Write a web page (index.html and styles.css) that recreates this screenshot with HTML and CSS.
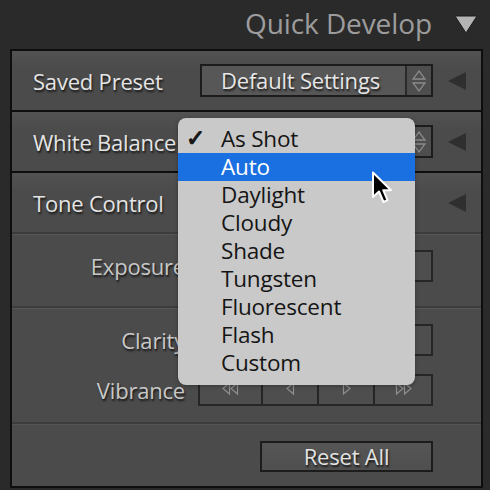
FILE: index.html
```html
<!DOCTYPE html>
<html>
<head>
<meta charset="utf-8">
<link rel="stylesheet" href="styles.css">
</head>
<body>
<div class="screen">
  <header class="title">
    <span class="title-text">Quick Develop</span>
    <svg class="disclosure" width="24" height="19" viewBox="0 0 24 19"><polygon points="1,1 23,1 12,18" fill="#b4b4b4" stroke="#1a1a1a" stroke-width="1"/></svg>
  </header>
  <div class="panel">
    <section class="row">
      <div class="label">Saved Preset</div>
      <div class="select">
        <span class="select-value">Default Settings</span>
        <span class="stepper"><svg width="16" height="26" viewBox="0 0 16 26"><polygon points="8,3 14,11 2,11" fill="none" stroke="#8a8a8a" stroke-width="1.3"/><polygon points="2,15 14,15 8,23" fill="none" stroke="#8a8a8a" stroke-width="1.3"/></svg></span>
      </div>
      <svg class="collapse" width="18" height="18" viewBox="0 0 18 18"><polygon points="18,0 18,18 0,9" fill="#2f2f2f"/></svg>
    </section>
    <section class="row">
      <div class="label">White Balance</div>
      <div class="select">
        <span class="select-value">As Shot</span>
        <span class="stepper"><svg width="16" height="26" viewBox="0 0 16 26"><polygon points="8,3 14,11 2,11" fill="none" stroke="#8a8a8a" stroke-width="1.3"/><polygon points="2,15 14,15 8,23" fill="none" stroke="#8a8a8a" stroke-width="1.3"/></svg></span>
      </div>
      <svg class="collapse" width="18" height="18" viewBox="0 0 18 18"><polygon points="18,0 18,18 0,9" fill="#2f2f2f"/></svg>
    </section>
    <section class="row row-tone">
      <div class="label">Tone Control</div>
      <div></div>
      <svg class="collapse" width="18" height="18" viewBox="0 0 18 18"><polygon points="18,0 18,18 0,9" fill="#2f2f2f"/></svg>
    </section>
    <section class="sub sub-single">
      <div class="sub-line">
        <div class="sub-label">Exposure</div>
        <div class="seg">
          <span class="seg-btn"><svg width="17" height="13" viewBox="0 0 17 13"><polygon points="7.5,1 7.5,12 1,6.5" fill="none" stroke="#8e8e8e" stroke-width="1.2"/><polygon points="15.5,1 15.5,12 9,6.5" fill="none" stroke="#8e8e8e" stroke-width="1.2"/></svg></span>
          <span class="seg-btn"><svg width="9" height="13" viewBox="0 0 9 13"><polygon points="7.5,1 7.5,12 1,6.5" fill="none" stroke="#8e8e8e" stroke-width="1.2"/></svg></span>
          <span class="seg-btn"><svg width="9" height="13" viewBox="0 0 9 13"><polygon points="1.5,1 1.5,12 8,6.5" fill="none" stroke="#8e8e8e" stroke-width="1.2"/></svg></span>
          <span class="seg-btn"><svg width="17" height="13" viewBox="0 0 17 13"><polygon points="1.5,1 1.5,12 8,6.5" fill="none" stroke="#8e8e8e" stroke-width="1.2"/><polygon points="9.5,1 9.5,12 16,6.5" fill="none" stroke="#8e8e8e" stroke-width="1.2"/></svg></span>
        </div>
      </div>
    </section>
    <section class="sub sub-double">
      <div class="sub-line">
        <div class="sub-label">Clarity</div>
        <div class="seg">
          <span class="seg-btn"><svg width="17" height="13" viewBox="0 0 17 13"><polygon points="7.5,1 7.5,12 1,6.5" fill="none" stroke="#8e8e8e" stroke-width="1.2"/><polygon points="15.5,1 15.5,12 9,6.5" fill="none" stroke="#8e8e8e" stroke-width="1.2"/></svg></span>
          <span class="seg-btn"><svg width="9" height="13" viewBox="0 0 9 13"><polygon points="7.5,1 7.5,12 1,6.5" fill="none" stroke="#8e8e8e" stroke-width="1.2"/></svg></span>
          <span class="seg-btn"><svg width="9" height="13" viewBox="0 0 9 13"><polygon points="1.5,1 1.5,12 8,6.5" fill="none" stroke="#8e8e8e" stroke-width="1.2"/></svg></span>
          <span class="seg-btn"><svg width="17" height="13" viewBox="0 0 17 13"><polygon points="1.5,1 1.5,12 8,6.5" fill="none" stroke="#8e8e8e" stroke-width="1.2"/><polygon points="9.5,1 9.5,12 16,6.5" fill="none" stroke="#8e8e8e" stroke-width="1.2"/></svg></span>
        </div>
      </div>
      <div class="sub-line">
        <div class="sub-label">Vibrance</div>
        <div class="seg">
          <span class="seg-btn"><svg width="17" height="13" viewBox="0 0 17 13"><polygon points="7.5,1 7.5,12 1,6.5" fill="none" stroke="#8e8e8e" stroke-width="1.2"/><polygon points="15.5,1 15.5,12 9,6.5" fill="none" stroke="#8e8e8e" stroke-width="1.2"/></svg></span>
          <span class="seg-btn"><svg width="9" height="13" viewBox="0 0 9 13"><polygon points="7.5,1 7.5,12 1,6.5" fill="none" stroke="#8e8e8e" stroke-width="1.2"/></svg></span>
          <span class="seg-btn"><svg width="9" height="13" viewBox="0 0 9 13"><polygon points="1.5,1 1.5,12 8,6.5" fill="none" stroke="#8e8e8e" stroke-width="1.2"/></svg></span>
          <span class="seg-btn"><svg width="17" height="13" viewBox="0 0 17 13"><polygon points="1.5,1 1.5,12 8,6.5" fill="none" stroke="#8e8e8e" stroke-width="1.2"/><polygon points="9.5,1 9.5,12 16,6.5" fill="none" stroke="#8e8e8e" stroke-width="1.2"/></svg></span>
        </div>
      </div>
    </section>
    <section class="footer">
      <div class="reset">Reset All</div>
    </section>
  </div>

  <ul class="menu">
    <li class="menu-item checked"><span class="check">✓</span>As Shot</li>
    <li class="menu-item active">Auto</li>
    <li class="menu-item">Daylight</li>
    <li class="menu-item">Cloudy</li>
    <li class="menu-item">Shade</li>
    <li class="menu-item">Tungsten</li>
    <li class="menu-item">Fluorescent</li>
    <li class="menu-item">Flash</li>
    <li class="menu-item">Custom</li>
  </ul>

  <svg class="cursor" width="24" height="36" viewBox="0 0 24 36">
    <polygon points="2,1.5 2,26 8,20.5 12.5,31 16.5,29.2 12.2,19.2 20,19.2" fill="#000" stroke="#fff" stroke-width="2" stroke-linejoin="round"/>
  </svg>
</div>
</body>
</html>
```

FILE: styles.css
```css
* { box-sizing: border-box; }
html, body {
  margin: 0;
  padding: 0;
  background: #2a2a2a;
}
.screen {
  position: relative;
  width: 490px;
  height: 490px;
  overflow: hidden;
  background: #2a2a2a;
  font-family: "Open Sans", "DejaVu Sans", sans-serif;
}
.title {
  height: 49px;
  display: flex;
  align-items: center;
  justify-content: flex-end;
  padding-right: 12px;
  gap: 22px;
}
.title-text {
  font-size: 28px;
  color: #9c9c9c;
  letter-spacing: -0.1px;
  margin-top: -3px;
}
.disclosure { display: block; margin-top: -1px; }

.panel {
  margin-left: 10px;
  width: 473px;
  border: 2px solid #0e0e0e;
  background: #4b4b4b;
}
.row {
  display: grid;
  grid-template-columns: 188px 233px 1fr;
  align-items: center;
  height: 61px;
  border-bottom: 2px solid #0e0e0e;
  background: linear-gradient(#525252, #4b4b4b 30%);
}
.row-tone {
  border-bottom: 2px solid #3c3c3c;
  height: 61px;
}
.label {
  padding-left: 21px;
  font-size: 22px;
  color: #e4e4e4;
  text-shadow: 1px 2px 2px #161616;
  white-space: nowrap;
  letter-spacing: -0.2px;
}
.select {
  height: 33px;
  display: flex;
  border: 2px solid #1c1c1c;
  background: #575757;
}
.select-value {
  flex: 1;
  font-size: 22px;
  color: #e6e6e6;
  text-shadow: 1px 2px 2px #1a1a1a;
  padding-left: 19px;
  line-height: 29px;
  letter-spacing: -0.2px;
  white-space: nowrap;
}
.stepper {
  width: 26px;
  border-left: 2px solid #2a2a2a;
  background: #4e4e4e;
  display: flex;
  align-items: center;
  justify-content: center;
}
.stepper svg { display: block; }
.collapse { justify-self: center; display: block; margin-left: -1px; }

.sub {
  border-top: 1px solid #555;
  border-bottom: 2px solid #3c3c3c;
}
.sub-single { height: 74px; padding-top: 15px; }
.sub-double {
  height: 116px;
  padding-top: 15px;
  display: flex;
  flex-direction: column;
  gap: 18px;
}
.sub-line {
  display: grid;
  grid-template-columns: 186px 235px;
  align-items: center;
  height: 32px;
}
.sub-label {
  text-align: right;
  padding-right: 13px;
  font-size: 22px;
  color: #c8c8c8;
  text-shadow: 1px 2px 2px #161616;
  letter-spacing: -0.2px;
}
.seg {
  height: 32px;
  display: grid;
  grid-template-columns: 61px 56px 56px 1fr;
  border: 2px solid #262626;
  background: #4e4e4e;
}
.seg-btn {
  display: flex;
  align-items: center;
  justify-content: center;
  border-left: 2px solid #262626;
}
.seg-btn:first-child { border-left: none; }
.seg-btn svg { display: block; margin-top: -3px; }

.footer {
  height: 62px;
  border-top: 1px solid #555;
  display: flex;
  align-items: center;
  padding-left: 248px;
  padding-top: 2px;
}
.reset {
  width: 173px;
  height: 31px;
  border: 2px solid #1c1c1c;
  background: linear-gradient(#555, #4f4f4f);
  font-size: 22px;
  color: #e2e2e2;
  text-shadow: 1px 2px 2px #161616;
  text-align: center;
  line-height: 26px;
  letter-spacing: -0.2px;
}

.menu {
  position: absolute;
  left: 178px;
  top: 118px;
  width: 237px;
  height: 267px;
  margin: 0;
  padding: 7px 0 0;
  list-style: none;
  background: #c9c9c9;
  border-radius: 8px;
  box-shadow: 0 1px 4px rgba(0,0,0,0.3);
}
.menu-item {
  position: relative;
  height: 28px;
  line-height: 28px;
  padding-left: 43px;
  font-size: 22.5px;
  color: #151515;
  letter-spacing: -0.2px;
}
.menu-item.active {
  background: #1a6fe1;
  color: #fff;
}
.check {
  position: absolute;
  left: 8px;
  top: -1px;
  font-family: "DejaVu Sans", sans-serif;
  font-size: 23px;
  -webkit-text-stroke: 1px #151515;
}
.cursor {
  position: absolute;
  left: 371px;
  top: 171px;
}
```
